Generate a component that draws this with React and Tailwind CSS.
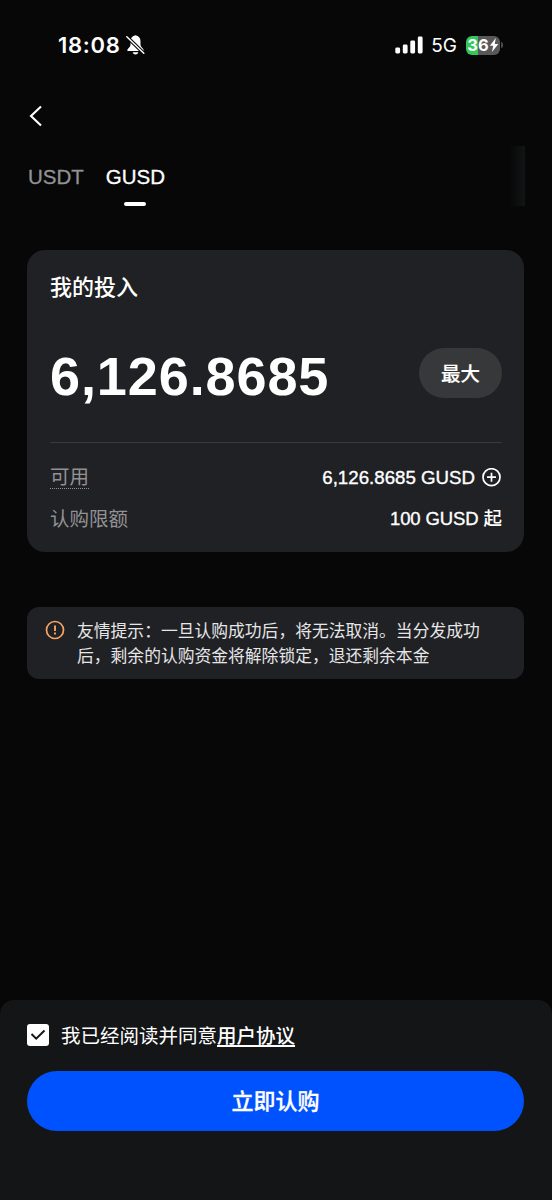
import React, { useState } from 'react';

const TABS = ['USDT', 'GUSD'];

function StatusBar() {
  return (
    <div className="flex h-[90px] items-center justify-between pr-[49px] pl-[58px] text-white">
      <div className="flex items-center gap-1">
        <span className="text-[22px] font-semibold tracking-[0.7px]">18:08</span>
        <svg width="21" height="22" viewBox="0 0 21 22">
          <path
            d="M10.5 1.2c-3.2.5-5 2.9-5 6v3.6c0 2-2 3-3 4.6-.5.9 0 1.6.9 1.6h14.2c.9 0 1.4-.7.9-1.6-1-1.6-3-2.6-3-4.6V7.2c0-3.1-1.8-5.5-5-6z"
            fill="currentColor"
          />
          <path d="M7.7 18.2h5.6c-.4 1.5-1.5 2.2-2.8 2.2s-2.4-.7-2.8-2.2z" fill="currentColor" />
          <path d="M1.8 2.8l17 16.4" stroke="#070707" strokeWidth="3.6" />
          <path d="M1.8 2.8l17 16.4" stroke="currentColor" strokeWidth="1.5" strokeLinecap="round" />
        </svg>
      </div>
      <div className="flex items-center">
        <svg width="28" height="18" viewBox="0 0 28 18" fill="currentColor">
          <rect x="0.3" y="11.5" width="4.8" height="6" rx="1.4" />
          <rect x="7.8" y="8.5" width="4.8" height="9" rx="1.4" />
          <rect x="15.3" y="4.5" width="4.8" height="13" rx="1.4" />
          <rect x="22.8" y="0.5" width="4.8" height="17" rx="1.4" />
        </svg>
        <span className="ml-2 text-[19px] leading-none">5G</span>
        <div className="ml-[9px] flex h-[19px] w-[34px] items-center justify-center rounded-[6px] bg-linear-to-r from-[#34c759] from-36% to-[#58585a] to-36%">
          <span className="text-[16.5px] leading-none font-bold">36</span>
          <svg width="10" height="14" viewBox="0 0 9 13" fill="currentColor">
            <path d="M6.2 0L.6 7.2h3.2L2.6 13 8.5 5.5H5.2z" />
          </svg>
        </div>
        <span className="ml-px h-[6px] w-[2px] rounded-r-full bg-[#4a4a4c]" />
      </div>
    </div>
  );
}

function Tabs({ active, onChange }) {
  return (
    <div className="flex h-[60px] justify-between pr-[27px] pl-7">
      <div className="flex gap-[22px]">
        {TABS.map((tab) => (
          <button
            key={tab}
            onClick={() => onChange(tab)}
            className={`flex flex-col items-center pt-[17px] font-['Liberation_Sans',sans-serif] text-[20.5px] leading-7 [-webkit-text-stroke:0.3px] ${
              tab === active ? 'text-white' : 'text-[#929294]'
            }`}
          >
            {tab}
            {tab === active && <span className="mt-[11px] h-[4px] w-[22px] rounded-full bg-white" />}
          </button>
        ))}
      </div>
      {/* scroll fade */}
      <div className="w-4 bg-linear-to-r from-[#070707] to-[#131416]" />
    </div>
  );
}

function InvestCard() {
  return (
    <section className="mt-11 mr-7 ml-[27px] h-[302px] rounded-[18px] bg-[#202124] pt-[23px] pr-[22px] pl-[23px] font-['Liberation_Sans','Noto_Sans_CJK_SC',sans-serif] text-white">
      <h2 className="text-[22px] leading-[30px] font-medium">我的投入</h2>
      <div className="mt-[45px] flex h-[50px] items-center justify-between">
        <span className="pt-[5px] text-[54px] leading-none font-bold tracking-[0.9px]">6,126.8685</span>
        <button className="h-[50px] w-[83px] rounded-full bg-[#37383a] pt-[3px] text-[19.5px] font-medium [-webkit-text-stroke:0.2px]">
          最大
        </button>
      </div>
      <div className="mt-11 h-px bg-[#38393c]" />
      <div className="mt-[22px] flex h-[26px] items-center justify-between">
        <span className="border-b border-dotted border-[#929294] text-[19.5px] leading-[21px] text-[#929294]">可用</span>
        <div className="flex items-center gap-[7px]">
          <span className="text-[18.7px] [-webkit-text-stroke:0.35px]">6,126.8685 GUSD</span>
          <svg width="20" height="20" viewBox="0 0 20 20" fill="none" stroke="currentColor" strokeWidth="1.7">
            <circle cx="9.5" cy="9.2" r="8.5" />
            <path d="M9.5 4.7v9M5 9.200h9" />
          </svg>
        </div>
      </div>
      <div className="mt-[15px] flex h-[26px] items-center justify-between">
        <span className="pt-0.5 text-[19.5px] text-[#929294]">认购限额</span>
        <span className="text-[18.5px] font-medium">
          <span className="tracking-[-0.15px] [-webkit-text-stroke:0.35px]">100 GUSD</span> 起
        </span>
      </div>
    </section>
  );
}

function Notice() {
  return (
    <div className="mt-[55px] mr-7 ml-[27px] flex h-[72px] rounded-xl bg-[#202124] pt-3 pl-[18px]">
      <svg className="mt-px shrink-0" width="20" height="20" viewBox="0 0 20 20" fill="none" stroke="#f5a566" strokeWidth="1.7">
        <circle cx="10" cy="10" r="8.5" />
        <path d="M10 5.5v5.6M10 12.6v2" strokeWidth="1.9" />
      </svg>
      <p className="ml-3 text-[16.8px] leading-[25px] text-[#e6e6e8]">
        友情提示：一旦认购成功后，将无法取消。当分发成功
        <br />
        后，剩余的认购资金将解除锁定，退还剩余本金
      </p>
    </div>
  );
}

function Footer() {
  const [agreed, setAgreed] = useState(true);

  return (
    <footer className="mt-auto h-[200px] rounded-t-[14px] bg-[#141517] pt-[22px] pr-7 pl-[27px] text-white">
      <div className="flex h-[26px] items-center">
        <button
          onClick={() => setAgreed(!agreed)}
          className="flex size-[22px] items-center justify-center rounded-[3px] bg-white"
        >
          {agreed && (
            <svg width="16" height="12" viewBox="0 0 16 12" fill="none" stroke="#141517" strokeWidth="2">
              <path d="M1.5 5l4.7 4.7 8.300-8.200" />
            </svg>
          )}
        </button>
        <p className="ml-3 pt-px text-[19.5px] leading-[26px]">
          我已经阅读并同意
          <a className="font-medium underline decoration-[1.5px] underline-offset-[2px]">用户协议</a>
        </p>
      </div>
      <button className="mt-[23px] h-[60px] w-full rounded-full bg-[#0052ff] text-[22px] font-medium [-webkit-text-stroke:0.3px]">
        立即认购
      </button>
    </footer>
  );
}

export default function App() {
  const [tab, setTab] = useState('GUSD');

  return (
    <div className="flex h-[1200px] w-[552px] flex-col overflow-hidden bg-[#070707] font-['Inter','Noto_Sans_CJK_SC',sans-serif]">
      <StatusBar />
      <div className="h-14 pt-[15px] pl-7 text-white">
        <svg width="16" height="22" viewBox="0 0 16 22" fill="none" stroke="currentColor" strokeWidth="2.1">
          <path d="M13 1.5L3 11l10 9.5" />
        </svg>
      </div>
      <Tabs active={tab} onChange={setTab} />
      <InvestCard />
      <Notice />
      <Footer />
    </div>
  );
}
